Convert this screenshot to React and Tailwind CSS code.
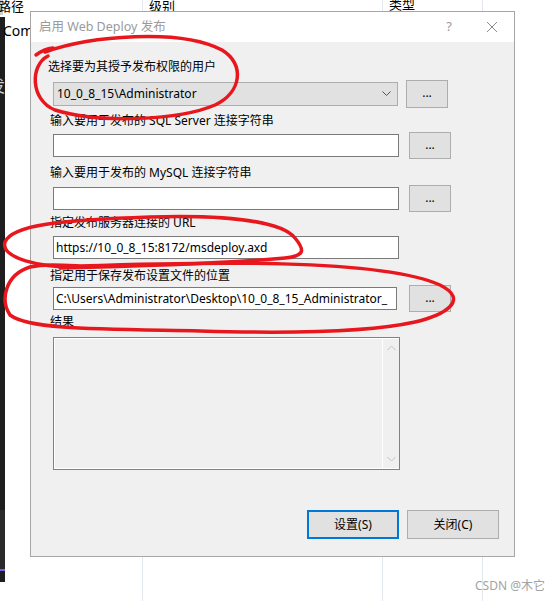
import React from "react";

const FONT = "font-['Noto_Sans','Noto_Sans_CJK_SC',sans-serif]";

function Label({ children, ml = "ml-[19px]", mt }) {
  return <div className={`${ml} ${mt} text-[12px] leading-[16px] text-black whitespace-nowrap`}>{children}</div>;
}

function DotsButton() {
  return (
    <div className="w-[42px] h-[27px] shrink-0 bg-[#e1e1e1] border border-[#adadad] flex items-center justify-center text-[12px] leading-none text-black pb-[2px]">
      ...
    </div>
  );
}

function TextBox({ value = "", w = "w-[346px]" }) {
  return (
    <div className={`${w} h-[23px] shrink-0 bg-white border border-[#7a7a7a] flex items-center pl-[2px] overflow-hidden text-[12px] text-black whitespace-nowrap`}>
      <span>{value}</span>
    </div>
  );
}

function Dialog() {
  return (
    <div className="absolute left-[30px] top-[11px] w-[485px] h-[546px] border border-[#a6a6a6] bg-[#f0f0f0] flex flex-col">
      {/* title bar */}
      <div className="h-[30px] bg-white flex items-center shrink-0">
        <div className="ml-[8px] text-[12.5px] text-[#9a9a9a] whitespace-nowrap">启用 Web Deploy 发布</div>
        <div className="ml-auto mr-[34px] text-[13px] text-[#9a9a9a]">?</div>
        <svg width="12" height="12" viewBox="0 0 12 12" className="mr-[16px]">
          <path d="M1 1 L11 11 M11 1 L1 11" stroke="#8a8a8a" strokeWidth="1" fill="none" />
        </svg>
      </div>
      {/* body */}
      <div className="flex flex-col">
        <Label ml="ml-[17px]" mt="mt-[17px]">选择要为其授予发布权限的用户</Label>
        <div className="mt-[5px] ml-[22px] flex items-center gap-[8px]">
          <div className="w-[345px] h-[24px] bg-[#e1e1e1] border border-[#adadad] flex items-center pl-[3px] text-[12px] text-black whitespace-nowrap">
            <span>10_0_8_15\Administrator</span>
            <svg width="9" height="6" viewBox="0 0 9 6" className="ml-auto mr-[6px]">
              <path d="M0.5 0.5 L4.5 4.5 L8.5 0.5" stroke="#505050" strokeWidth="1" fill="none" />
            </svg>
          </div>
          <div className="w-[42px] h-[28px] shrink-0 bg-[#e1e1e1] border border-[#adadad] flex items-center justify-center text-[12px] leading-none text-black pb-[2px]">
            ...
          </div>
        </div>

        <Label mt="mt-[5px]">输入要用于发布的 SQL Server 连接字符串</Label>
        <div className="mt-[3px] ml-[22px] flex items-center gap-[10px]">
          <TextBox />
          <DotsButton />
        </div>

        <Label mt="mt-[6px]">输入要用于发布的 MySQL 连接字符串</Label>
        <div className="mt-[4px] ml-[22px] flex items-center gap-[10px]">
          <TextBox />
          <DotsButton />
        </div>

        <Label mt="mt-[3px]">指定发布服务器连接的 URL</Label>
        <div className="mt-[5px] ml-[22px] flex">
          <TextBox value="https://10_0_8_15:8172/msdeploy.axd" />
        </div>

        <Label mt="mt-[9px]">指定用于保存发布设置文件的位置</Label>
        <div className="mt-[1px] ml-[22px] flex items-center gap-[12px]">
          <TextBox w="w-[344px]" value="C:\Users\Administrator\Desktop\10_0_8_15_Administrator_" />
          <DotsButton />
        </div>

        <Label mt="mt-[2px]">结果</Label>
        <div className="mt-[7px] ml-[22px] w-[347px] h-[133px] border border-[#828282] flex">
          <div className="flex-1 border border-white border-r-0 flex">
            <div className="flex-1" />
            <div className="w-[17px] border-l border-white flex flex-col items-center justify-between py-[6px]">
              <svg width="9" height="6" viewBox="0 0 9 6">
                <path d="M0.5 5 L4.5 1 L8.5 5" stroke="#c2c2c2" strokeWidth="1" fill="none" />
              </svg>
              <svg width="9" height="6" viewBox="0 0 9 6">
                <path d="M0.5 1 L4.5 5 L8.5 1" stroke="#c2c2c2" strokeWidth="1" fill="none" />
              </svg>
            </div>
          </div>
        </div>

        <div className="mt-[40px] flex justify-end gap-[8px] pr-[15px]">
          <div className="w-[92px] h-[29px] bg-[#e1e1e1] border-2 border-[#0078d7] flex items-center justify-center text-[12px] text-black">
            设置(S)
          </div>
          <div className="w-[92px] h-[29px] bg-[#e1e1e1] border border-[#adadad] flex items-center justify-center text-[12px] text-black">
            关闭(C)
          </div>
        </div>
      </div>
    </div>
  );
}

function Annotations() {
  return (
    <svg className="absolute inset-0 pointer-events-none" width="557" height="601" viewBox="0 0 557 601">
      <g stroke="#e8171d" strokeWidth="3.5" fill="none" strokeLinecap="round" strokeLinejoin="round">
        <path d="M36 55 Q44 49 53 48" />
        <path d="M45 52 C90 36 180 28 222 50 C245 64 242 92 215 105 C180 120 100 124 55 110 C30 100 30 65 48 56" />
        <path d="M80 267 C40 268 0 258 5 242 C12 225 60 220 150 217 C220 215 280 220 295 238 C305 250 305 256 285 258 C240 262 150 266 60 268" />
        <path d="M80 266 C200 262 380 258 440 285 C470 300 445 315 415 322 C370 332 300 334 200 331 C100 329 30 330 10 315 C0 300 5 275 30 267 C45 264 60 265 80 266" />
      </g>
    </svg>
  );
}

export default function App() {
  return (
    <div className={`relative w-[557px] h-[601px] overflow-hidden bg-white flex ${FONT}`}>
      {/* left dark strip */}
      <div className="w-[5px] h-full flex flex-col shrink-0 overflow-hidden">
        <div className="h-[17px] bg-white flex">
          <div className="w-[3px] h-[15px] bg-[#cfcfcf]" />
        </div>
        <div className="h-[493px] bg-[#1e1e1e] flex flex-col">
          <div className="mt-[60px] -ml-[11px] text-[16px] leading-[18px] text-[#d0d0d0]">发</div>
        </div>
        <div className="h-[59px] bg-[#2a2a2a]" />
        <div className="h-[2px] bg-[#7a5cf0]" />
        <div className="h-[11px] bg-[#1e1e1e]" />
      </div>
      {/* background table */}
      <div className="flex-1 flex h-full">
        <div className="w-[138px] h-full border-r border-[#e3e8ef] flex flex-col">
          <div className="-ml-[7px] -mt-[2px] text-[13px] leading-[16px] text-black">路径</div>
          <div className="-ml-[2px] mt-[8px] text-[14px] leading-[17px] text-black">ComC</div>
        </div>
        <div className="w-[240px] h-full border-r border-[#e3e8ef]">
          <div className="ml-[6px] -mt-[2px] text-[13px] leading-[16px] text-black">级别</div>
        </div>
        <div className="w-[100px] h-full border-r border-[#e3e8ef]">
          <div className="ml-[6px] -mt-[4px] text-[13px] leading-[16px] text-black">类型</div>
        </div>
        <div className="flex-1" />
      </div>

      <Dialog />
      <Annotations />

      <div className="absolute left-[475px] top-[578px] text-[12px] leading-[16px] text-[#a3a3a3] whitespace-nowrap">CSDN @木它</div>
    </div>
  );
}
